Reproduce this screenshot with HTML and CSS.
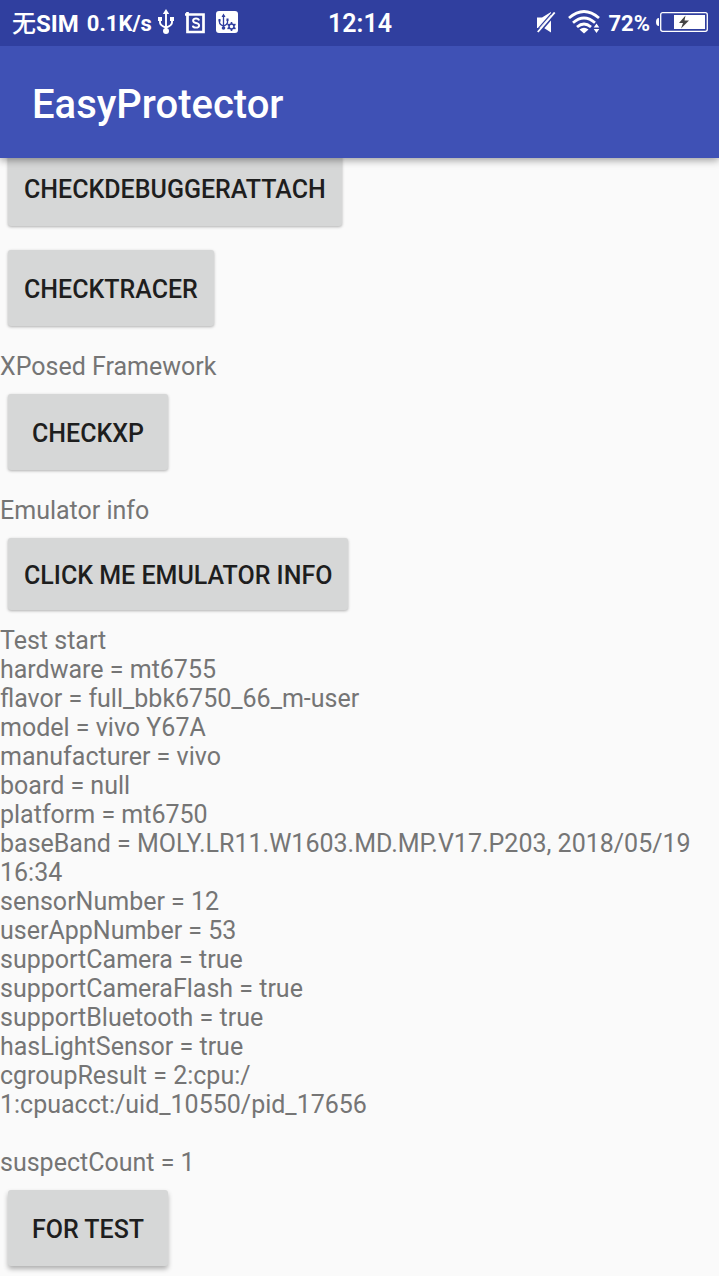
FILE: index.html
```html
<!DOCTYPE html>
<html lang="en">
<head>
<meta charset="utf-8">
<title>EasyProtector</title>
<link rel="stylesheet" href="styles.css">
</head>
<body>
<div class="screen">
  <div class="status">
    <div class="status-left">
      <span class="carrier"><span class="cjk">无</span>SIM</span>
      <span class="speed">0.1K/s</span>
      <svg class="usb" width="16" height="26" viewBox="0 0 16 26" fill="none" stroke="#fff" stroke-width="1.900">
        <path d="M8 4v17M2 10v3.500q0 3 6 5M14 9.500v4q0 3-6 5"/>
        <path d="M8 0l3.200 5H4.800zM0 8h4v4H0zM12 8h4v4h-4z" fill="#fff" stroke="none"/>
        <circle cx="8" cy="22" r="3" fill="#fff" stroke="none"/>
      </svg>
      <svg class="shot" width="20" height="23" viewBox="0 0 20 23" fill="none" stroke="#fff">
        <path d="M0 3.500h18.500v17.500H2.500V1" stroke-width="2.700"/>
        <path d="M14 9.500q-.4-2-3-2t-2.900 2q0 1.900 2.900 2.500t3.100 2.400q0 2.200-3.100 2.200T7.800 14.600" stroke-width="1.900"/>
      </svg>
      <svg class="debug" width="22" height="22" viewBox="0 0 22 22" fill="none" stroke="#303f9f" stroke-width="1.300">
        <rect width="22" height="22" rx="3" fill="#fff" stroke="none"/>
        <path d="M7.500 4v13M3.500 9v2.500q0 2 4 3.500M11.500 8.500v3q0 2-4 3.500"/>
        <path d="M7.500 2.500l2 3.500h-4zM2.500 8h2v2.500h-2zM10.500 7.500h2v2.500h-2z" fill="#303f9f" stroke="none"/>
        <circle cx="7.500" cy="17" r="1.800" fill="#303f9f" stroke="none"/>
        <circle cx="15.500" cy="15.500" r="2.500" stroke-width="1.500"/>
        <path d="M15.500 11v2M15.500 18v2M11.500 13.200l1.800 1M17.700 16.800l1.800 1M11.500 17.800l1.800-1M17.700 14.200l1.800-1" stroke-width="1.600"/>
      </svg>
    </div>
    <span class="clock">12:14</span>
    <div class="status-right">
      <svg class="mute" width="19" height="21" viewBox="0 0 19 21">
        <path d="M0 5.500h5L14 0v20.500L7 16H0z" fill="#fff"/>
        <path d="M1.500 20.500L18.500 1" stroke="#303f9f" stroke-width="3.200"/>
        <path d="M-.5 18.500L15.700 0" stroke="#303f9f" stroke-width="1.200"/>
        <path d="M.8 20L17.700.5" stroke="#fff" stroke-width="1.900"/>
      </svg>
      <svg class="wifi" width="32" height="24" viewBox="0 0 32 24" fill="none" stroke="#fff" stroke-width="2.800">
        <path d="M1 8q15-13 30 0M5 12.700q11-9.500 22 0M9 17q7-6 14 0"/>
        <path d="M11.500 19.500q4.500-3.500 9 0L16 23.500z" fill="#fff" stroke="none"/>
        <path d="M28.500 13l3.500 5h-7z" fill="#303f9f" stroke="#303f9f" stroke-width="1.500"/>
        <path d="M28.500 13.500l2.800 4h-5.600zM28.500 23l2.800-4h-5.600z" fill="#fff" stroke="none"/>
      </svg>
      <span class="percent">72%</span>
      <svg class="battery" width="52" height="20" viewBox="0 0 52 20">
        <path d="M3 6Q0 6 0 10t3 4z" fill="#fff"/>
        <rect x="4.700" y=".7" width="46.600" height="18.600" rx="2" fill="none" stroke="#fff" stroke-width="1.300"/>
        <rect x="18" y="3" width="31" height="14" fill="#fff"/>
        <path d="M29.500 3.500L23 11h4l-2 5.500 8-8h-4.500z" fill="#444"/>
      </svg>
    </div>
  </div>
  <div class="appbar">EasyProtector</div>
  <div class="content">
    <button class="btn first">CHECKDEBUGGERATTACH</button>
    <button class="btn">CHECKTRACER</button>
    <div class="label">XPosed Framework</div>
    <button class="btn">CHECKXP</button>
    <div class="label">Emulator info</div>
    <button class="btn short">CLICK ME EMULATOR INFO</button>
    <div class="log">Test start
hardware = mt6755
flavor = full_bbk6750_66_m-user
model = vivo Y67A
manufacturer = vivo
board = null
platform = mt6750
baseBand = MOLY.LR11.W1603.MD.MP.V17.P203, 2018/05/19 16:34
sensorNumber = 12
userAppNumber = 53
supportCamera = true
supportCameraFlash = true
supportBluetooth = true
hasLightSensor = true
cgroupResult = 2:cpu:/
1:cpuacct:/uid_10550/pid_17656

suspectCount = 1</div>
    <button class="btn raised">FOR TEST</button>
  </div>
</div>
</body>
</html>
```
FILE: styles.css
```css
body {
  margin: 0;
  font-family: Roboto, "Noto Sans CJK SC", sans-serif;
}

.screen {
  display: flex;
  flex-direction: column;
  width: 719px;
  height: 1276px;
  overflow: hidden;
  background: #fafafa;
}

.status {
  flex: none;
  display: grid;
  grid-template-columns: 1fr auto 1fr;
  height: 46px;
  box-sizing: border-box;
  padding: 0 11px 0 12px;
  background: #303f9f;
  color: #fff;
  font-size: 22px;
  font-weight: 700;
  white-space: nowrap;
  z-index: 2;
}

.status-left,
.status-right {
  display: flex;
  align-items: center;
  height: 44px;
}

.status-right {
  justify-content: flex-end;
}

.carrier,
.speed,
.percent {
  padding-top: 3px;
  line-height: 44px;
}

.carrier {
  font-size: 24px;
}

.cjk {
  font-weight: 500;
}

.speed {
  margin-left: 8px;
}

.usb {
  margin-left: 6px;
}

.shot {
  margin-left: 11px;
}

.debug {
  margin-left: 11px;
}

.clock {
  font-size: 25px;
  font-weight: 600;
  line-height: 48px;
}

.wifi {
  margin-left: 12px;
}

.percent {
  margin-left: 8px;
}

.battery {
  margin-left: 6px;
}

.appbar {
  flex: none;
  height: 112px;
  box-sizing: border-box;
  padding-left: 32px;
  background: #3f51b5;
  box-shadow: 0 2px 8px rgba(0, 0, 0, 0.4);
  color: #fff;
  font-size: 40px;
  font-weight: 500;
  line-height: 118px;
  z-index: 1;
}

.content {
  display: flex;
  flex-direction: column;
  align-items: flex-start;
  color: #757575;
  font-size: 25px;
  line-height: 29px;
}

.btn {
  flex: none;
  min-width: 160px;
  height: 76px;
  margin: 12px 8px;
  padding: 2px 16px 0;
  border: 0;
  border-radius: 3px;
  background: #d6d7d7;
  box-shadow: 0 1px 3px rgba(0, 0, 0, 0.3);
  color: #1e1e1e;
  font: 500 25px/29px Roboto, sans-serif;
}

.first {
  margin-top: -8px;
}

.label {
  height: 32px;
  margin: 14px 0 -2px;
  line-height: 30px;
}

.short {
  height: 72px;
}

.log {
  width: 719px;
  margin-top: 4px;
  padding-bottom: 1px;
  white-space: pre-wrap;
}

.raised {
  box-shadow: 0 3px 5px rgba(0, 0, 0, 0.3);
}
```
